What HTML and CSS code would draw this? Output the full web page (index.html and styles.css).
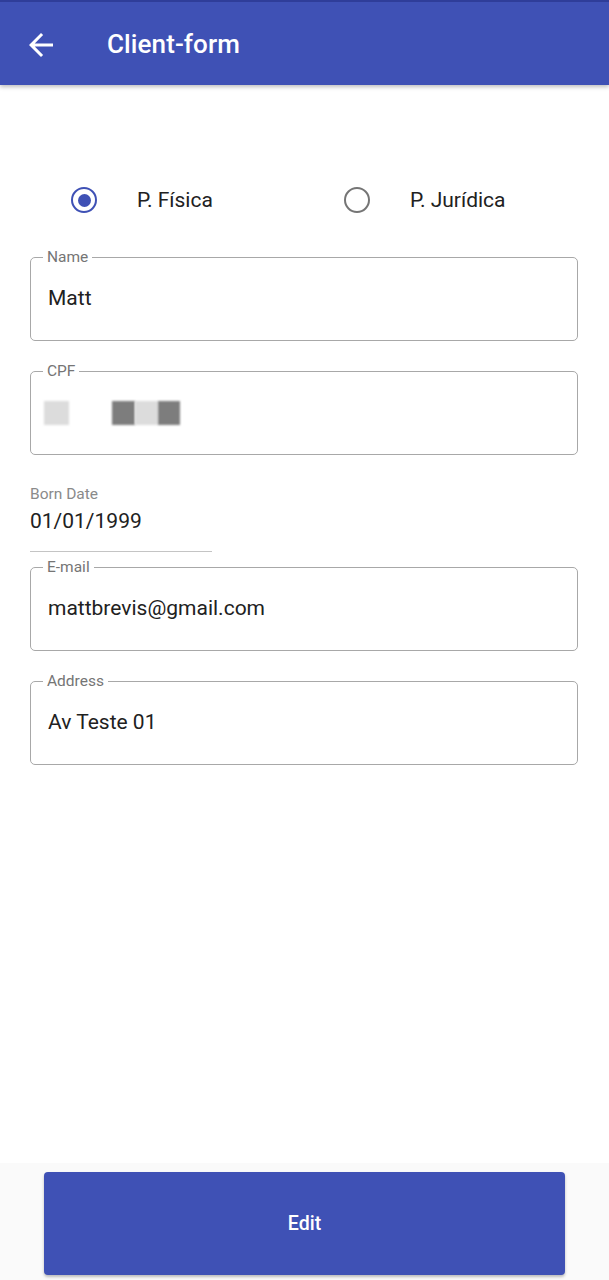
FILE: index.html
```html
<!DOCTYPE html>
<html lang="pt">
<head>
<meta charset="utf-8">
<title>Client-form</title>
<link rel="stylesheet" href="styles.css">
</head>
<body>
<div class="screen">
  <header class="appbar">
    <button class="back" aria-label="Back">
      <svg viewBox="0 0 24 24" width="36" height="36"><path d="M20 11H7.83l5.59-5.59L12 4l-8 8 8 8 1.41-1.41L7.83 13H20v-2z" fill="#fff"/></svg>
    </button>
    <h1 class="title">Client-form</h1>
  </header>

  <main class="form">
    <div class="radio-row">
      <label class="option">
        <span class="radio checked"><span class="dot"></span></span>
        <span class="option-text">P. Física</span>
      </label>
      <label class="option">
        <span class="radio"></span>
        <span class="option-text">P. Jurídica</span>
      </label>
    </div>

    <fieldset class="field">
      <legend>Name</legend>
      <div class="value">Matt</div>
    </fieldset>

    <fieldset class="field">
      <legend>CPF</legend>
      <div class="value blurred">
        <span class="blk light b1"></span>
        <span class="blk dark b2"></span>
        <span class="blk light b3"></span>
        <span class="blk dark b4"></span>
      </div>
    </fieldset>

    <div class="date-field">
      <div class="date-label">Born Date</div>
      <div class="date-value">01/01/1999</div>
    </div>

    <fieldset class="field">
      <legend>E-mail</legend>
      <div class="value">mattbrevis@gmail.com</div>
    </fieldset>

    <fieldset class="field">
      <legend>Address</legend>
      <div class="value">Av Teste 01</div>
    </fieldset>
  </main>

  <footer class="bottom">
    <button class="edit-btn">Edit</button>
  </footer>
</div>
</body>
</html>
```

FILE: styles.css
```css
* { box-sizing: border-box; }

html, body {
  margin: 0;
  padding: 0;
  background: #ffffff;
}

body {
  font-family: Roboto, "Noto Sans", Arial, sans-serif;
  color: #212121;
}

.screen {
  height: 1280px;
  display: flex;
  flex-direction: column;
}

.appbar {
  height: 85px;
  flex: none;
  background: #3f51b5;
  border-top: 2px solid #2f3d99;
  display: flex;
  align-items: center;
  box-shadow: 0 2px 4px rgba(0, 0, 0, 0.25);
  position: relative;
  z-index: 1;
}

.back {
  width: 36px;
  height: 36px;
  margin-left: 23px;
  margin-top: 2px;
  padding: 0;
  border: 0;
  background: transparent;
  display: flex;
}

.title {
  margin: 0 0 0 48px;
  color: #ffffff;
  font-size: 26px;
  font-weight: 500;
  letter-spacing: 0.1px;
}

.form {
  flex: 1;
  padding: 0 31px 0 30px;
}

.radio-row {
  display: flex;
  margin-top: 100px;
  padding-left: 41px;
  height: 30px;
  align-items: center;
}

.option {
  flex: none;
  width: 273px;
  display: flex;
  align-items: center;
}

.radio {
  width: 26px;
  height: 26px;
  border-radius: 50%;
  border: 2.5px solid #757575;
  display: flex;
  align-items: center;
  justify-content: center;
  flex: none;
}

.radio.checked {
  border-color: #3f51b5;
}

.dot {
  width: 13px;
  height: 13px;
  border-radius: 50%;
  background: #3f51b5;
}

.option-text {
  margin-left: 40px;
  font-size: 21px;
  color: #212121;
}

.field {
  margin: 34px 0 0;
  padding: 0 16px;
  border: 1px solid #a8a8a8;
  border-radius: 5px;
  min-width: 0;
}

.field + .field { margin-top: 22px; }

.field legend {
  padding: 0 4px;
  margin-left: -4px;
  font-size: 15.5px;
  line-height: 16px;
  color: #757575;
}

.value {
  padding: 21px 0 30px 1px;
  height: 75px;
  font-size: 21px;
  line-height: 24px;
  color: #212121;
}

.blurred {
  display: flex;
  align-items: center;
  padding: 0 0 8px 0;
  height: 75px;
}

.blk {
  display: block;
  height: 24px;
  filter: blur(1px);
}

.blk.light { background: #dcdcdc; }
.blk.dark { background: #7d7d7d; }
.b1 { width: 25px; margin-left: -3px; background: #e2e2e2; }
.b2 { width: 23px; margin-left: 43px; }
.b3 { width: 23px; background: #d4d4d4; }
.b4 { width: 22px; background: #868686; }

.date-field {
  margin-top: 31px;
  width: 182px;
  padding-bottom: 18px;
  border-bottom: 1px solid #c4c4c4;
}

.date-label {
  font-size: 15.5px;
  line-height: 16px;
  color: #8a8a8a;
}

.date-value {
  margin-top: 7px;
  font-size: 21px;
  line-height: 24px;
  color: #212121;
}

.date-field + .field { margin-top: 7px; }

.bottom {
  flex: none;
  height: 117px;
  background: #fafafa;
  padding: 9px 44px 5px 44px;
  display: flex;
}

.edit-btn {
  flex: 1;
  border: 0;
  border-radius: 4px;
  background: #3f51b5;
  color: #ffffff;
  font-family: Roboto, Arial, sans-serif;
  font-size: 19.5px;
  font-weight: 500;
  box-shadow: 0 2px 3px rgba(0, 0, 0, 0.25);
}
```
